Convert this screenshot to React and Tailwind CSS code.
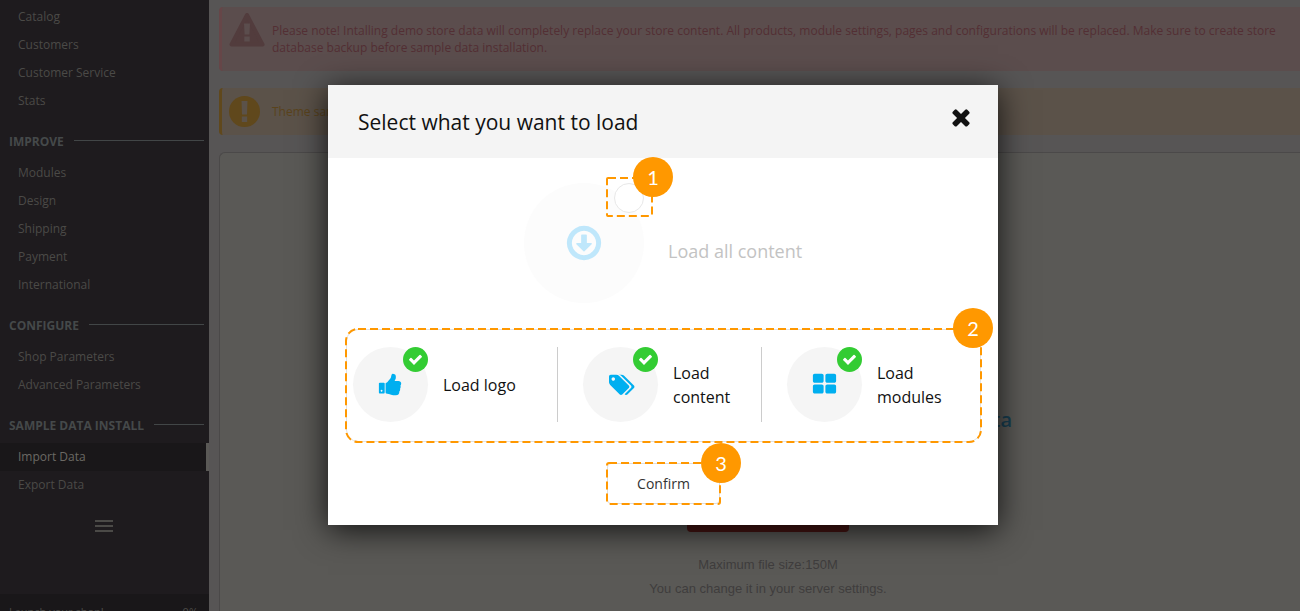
const P = {
  thumb:
    'M320 1344q0-26-19-45t-45-19q-27 0-45.5 19t-18.5 45q0 27 18.5 45.5t45.5 18.5q26 0 45-18.5t19-45.5zm160-512v640q0 26-19 45t-45 19h-288q-26 0-45-19t-19-45v-640q0-26 19-45t45-19h288q26 0 45 19t19 45zm1184 0q0 86-55 149 15 44 15 76 3 76-43 137 17 56 0 117-15 57-54 94 9 112-49 181-64 76-197 78h-129q-66 0-144-15.5t-121.5-29-120.5-39.5q-123-43-158-44-26-1-45-19.5t-19-44.5v-641q0-25 18-43.5t43-20.5q24-2 76-59t101-121q68-87 101-120 18-18 31-48t17.5-48.5 13.5-60.5q7-39 12.5-61t19.5-52 34-50q19-19 45-19 46 0 82.5 10.5t60 26 40 40.5 24 45 12 50 5 45 .5 39q0 38-9.5 76t-19 60-27.5 56q-3 6-10 18t-11 22-8 24h277q78 0 135 57t57 135z',
  tags: 'M576 448q0-53-37.5-90.5t-90.5-37.5-90.5 37.5-37.5 90.5 37.5 90.5 90.5 37.5 90.5-37.5 37.5-90.5zm1067 576q0 53-37 90l-491 492q-39 37-91 37-53 0-90-37l-715-716q-38-37-64.5-101t-26.5-117v-416q0-52 38-90t90-38h416q53 0 117 26.5t102 64.5l715 714q37 39 37 91zm384 0q0 53-37 90l-491 492q-39 37-91 37-36 0-59-14t-53-45l470-470q37-37 37-90 0-52-37-91l-715-714q-38-38-102-64.5t-117-26.5h224q53 0 117 26.5t102 64.5l715 714q37 39 37 91z',
  grid: 'M832 1024v384q0 52-38 90t-90 38h-512q-52 0-90-38t-38-90v-384q0-52 38-90t90-38h512q52 0 90 38t38 90zm0-768v384q0 52-38 90t-90 38h-512q-52 0-90-38t-38-90v-384q0-52 38-90t90-38h512q52 0 90 38t38 90zm896 768v384q0 52-38 90t-90 38h-512q-52 0-90-38t-38-90v-384q0-52 38-90t90-38h512q52 0 90 38t38 90zm0-768v384q0 52-38 90t-90 38h-512q-52 0-90-38t-38-90v-384q0-52 38-90t90-38h512q52 0 90 38t38 90z',
  check:
    'M1671 566q0 40-28 68l-724 724-136 136q-28 28-68 28t-68-28l-136-136-362-362q-28-28-28-68t28-68l136-136q28-28 68-28t68 28l294 295 656-657q28-28 68-28t68 28l136 136q28 28 28 68z',
  times:
    'M1490 1322q0 40-28 68l-136 136q-28 28-68 28t-68-28l-294-294-294 294q-28 28-68 28t-68-28l-136-136q-28-28-28-68t28-68l294-294-294-294q-28-28-28-68t28-68l136-136q28-28 68-28t68 28l294 294 294-294q28-28 68-28t68 28l136 136q28 28 28 68t-28 68l-294 294 294 294q28 28 28 68z',
  down: 'M1248 928q0 13-10 23l-319 320q-10 9-23 9-12 0-23-9l-320-320q-15-16-7-35 8-20 30-20h192v-352q0-14 9-23t23-9h192q14 0 23 9t9 23v352h192q14 0 23 9t9 23zm-352-576q-148 0-273 73t-198 198-73 273 73 273 198 198 273 73 273-73 198-198 73-273-73-273-198-198-273-73zm768 544q0 209-103 385.5t-279.5 279.5-385.5 103-385.5-103-279.5-279.5-103-385.5 103-385.5 279.5-279.5 385.5-103 385.5 103 279.5 279.5 103 385.5z',
};

function Icon({ name, className, viewBox = '0 0 1792 1792' }) {
  return (
    <svg viewBox={viewBox} fill="currentColor" aria-hidden="true" className={className}>
      <path d={P[name]} />
    </svg>
  );
}

function Group({ title, items }) {
  return (
    <section>
      {title && (
        <h2 className="mt-[13px] mb-[3px] flex h-7 items-center gap-[10px] pr-[5px] pl-[9px] text-xs font-bold whitespace-nowrap text-[#45494a]">
          {title}
          <span className="mb-[3px] h-px flex-1 bg-[#424647]" />
        </h2>
      )}
      <ul>
        {items.map((item) => (
          <li key={item}>
            <a
              href="#"
              className={
                item === 'Import Data'
                  ? 'block h-7 border-r-3 border-[#5a5956] bg-[#191719] pl-[18px] text-xs leading-7 text-[#6b6964]'
                  : 'block h-7 pl-[18px] text-xs leading-7 text-[#4b4a47]'
              }
            >
              {item}
            </a>
          </li>
        ))}
      </ul>
    </section>
  );
}

function Outline({ r, n, className, stepClass }) {
  return (
    <span className={className}>
      <svg className="block size-full overflow-visible" aria-hidden="true">
        <rect width="100%" height="100%" rx={r} fill="none" stroke="#ff9800" strokeWidth="2" strokeDasharray="8 4" />
      </svg>
      <span
        className={
          'absolute flex size-10 items-center justify-center rounded-full bg-[#ff9800] font-[Lato,sans-serif] text-xl text-white ' +
          stepClass
        }
      >
        {n}
      </span>
    </span>
  );
}

function Option({ icon, label, viewBox, iconClass, className }) {
  return (
    <label className={className}>
      <span className="relative flex size-[75px] shrink-0 items-center justify-center rounded-full bg-[#f5f5f5] text-[#00aff0]">
        <Icon name={icon} viewBox={viewBox} className={iconClass} />
        <input type="checkbox" defaultChecked className="absolute top-0 right-0 size-[25px] appearance-none rounded-full bg-[#33cc33]" />
        <span className="pointer-events-none absolute top-0 right-0 flex size-[25px] items-center justify-center text-white">
          <Icon name="check" className="size-[15px]" />
        </span>
      </span>
      <span>{label}</span>
    </label>
  );
}

export default function App() {
  return (
    <div className="relative flex h-screen overflow-hidden bg-[#575555] font-['Open_Sans',sans-serif]">
      <nav className="flex w-[209px] shrink-0 flex-col bg-[#1e1b1e] pt-[3px]">
        <Group items={['Catalog', 'Customers', 'Customer Service', 'Stats']} />
        <Group title="IMPROVE" items={['Modules', 'Design', 'Shipping', 'Payment', 'International']} />
        <Group title="CONFIGURE" items={['Shop Parameters', 'Advanced Parameters']} />
        <Group title="SAMPLE DATA INSTALL" items={['Import Data', 'Export Data']} />
        <button aria-label="Collapse menu" className="mt-[21px] ml-[95px] flex w-[18px] flex-col gap-[3px]">
          <span className="h-[2px] w-full bg-[#4b4a47]" />
          <span className="h-[2px] w-full bg-[#4b4a47]" />
          <span className="h-[2px] w-full bg-[#4b4a47]" />
        </button>
        <div className="mt-auto flex h-[17px] shrink-0 justify-between overflow-hidden bg-[#191719] pt-2 pr-[11px] pl-[9px] text-[11px] leading-5 text-[#4b4a47]">
          <span>Launch your shop!</span>
          <span>0%</span>
        </div>
      </nav>

      <main className="flex min-w-0 flex-1 flex-col pt-[7px] pl-[10px]">
        <div className="flex h-16 shrink-0 rounded-l-sm border-l-3 border-[#664648] bg-[#5b4d4d] pl-[7px] text-[#532f34]">
          <svg viewBox="0 0 36 34" className="mt-[6px] h-[34px] w-9 shrink-0" aria-hidden="true">
            <path d="M18 2 33.5 31.5H2.5Z" fill="#523c3d" stroke="#523c3d" strokeWidth="4" strokeLinejoin="round" />
            <path d="M15 10.5h6l-.6 11h-4.8zM15.3 23.5h5.4v5h-5.4z" fill="#5b4d4d" />
          </svg>
          <p className="ml-[7px] pt-[15px] pr-5 text-xs leading-[17px]">
            Please note! Intalling demo store data will completely replace your store content. All products, module settings, pages and configurations will be replaced. Make sure to create store database backup before sample data installation.
          </p>
        </div>
        <div className="mt-[17px] flex h-[47px] shrink-0 items-center rounded-l-sm border-l-3 border-[#60481c] bg-[#5b5249] pl-[7px] text-xs text-[#5a431c]">
          <svg viewBox="0 0 31 31" className="size-[31px] shrink-0" aria-hidden="true">
            <circle cx="15.5" cy="15.5" r="15.5" fill="#60481c" />
            <path d="M12.5 5h6l-.5 13.5h-5zM12.8 20.5h5.4v5.5h-5.4z" fill="#5b5249" />
          </svg>
          <p className="ml-3">Theme sample data</p>
        </div>
        <section className="mt-[17px] flex flex-1 flex-col items-center rounded-tl-md border-t border-l border-[#4b4949] bg-[#5a5956] pl-4 font-['Liberation_Sans',sans-serif] text-[13px] text-[#3f3d3d]">
          <h1 className="mt-[253px] w-[488px] text-right font-['Open_Sans',sans-serif] text-xl leading-7 font-semibold text-[#173f52]">Import sample data</h1>
          <button className="mt-[58px] h-10 w-[162px] shrink-0 rounded-sm bg-[#4a1613]">Import</button>
          <p className="mt-[21px] leading-6">Maximum file size:150M</p>
          <p className="leading-6">You can change it in your server settings.</p>
        </section>
      </main>

      <div
        role="dialog"
        aria-labelledby="dialog-title"
        className="absolute top-[85px] left-[calc(50%-322px)] w-[670px] bg-white pb-[21px] text-[#111] shadow-[0_5px_30px_rgba(0,0,0,0.8)]"
      >
        <header className="flex h-[73px] items-center justify-between bg-[#f4f4f4] pr-6 pl-[30px]">
          <h2 id="dialog-title" className="pt-[2px] text-[21px]">Select what you want to load</h2>
          <button aria-label="Close" className="mb-[10px]">
            <Icon name="times" className="size-[26px]" />
          </button>
        </header>

        <label className="mt-[25px] ml-[196px] flex w-max items-center gap-6">
          <span className="relative flex size-[120px] items-center justify-center rounded-full bg-[#fcfcfc] text-[#bfe7fb]">
            <Icon name="down" className="size-10" />
            <input type="checkbox" className="absolute top-0 right-0 size-[30px] appearance-none rounded-full border border-[#e8e8e8] bg-white" />
            <Outline n="1" r="1" stepClass="-top-[21px] -right-[21px]" className="absolute -top-[5px] -right-2 h-[38px] w-[45px]" />
          </span>
          <span className="pt-4 text-lg text-[#c3c3c3]">Load all content</span>
        </label>

        <div className="relative mt-[26px] mr-[17px] ml-[18px] flex h-[113px] items-center rounded-xl border border-[#e2e2e2] pb-[2px] pl-[6px] leading-6">
          <Outline n="2" r="12" stepClass="-top-[21px] -right-3" className="pointer-events-none absolute -inset-px" />
          <Option icon="thumb" label="Load logo" iconClass="size-[25px]" className="flex w-[205px] items-center gap-[15px] border-r border-[#ccc]" />
          <Option icon="tags" viewBox="0 0 2048 1792" label="Load content" iconClass="h-6 w-7" className="flex w-[204px] items-center gap-[15px] border-r border-[#ccc] pr-[30px] pl-[25px]" />
          <Option icon="grid" label="Load modules" iconClass="size-[25px]" className="flex w-[204px] items-center gap-[15px] pr-[30px] pl-[25px]" />
        </div>

        <button className="relative mt-[21px] ml-[279px] block h-[41px] w-[113px] rounded-sm border border-[#dedede] text-sm text-[#333]">
          Confirm
          <Outline n="3" r="2" stepClass="-top-5 -right-[21px]" className="absolute -inset-px" />
        </button>
      </div>
    </div>
  );
}
